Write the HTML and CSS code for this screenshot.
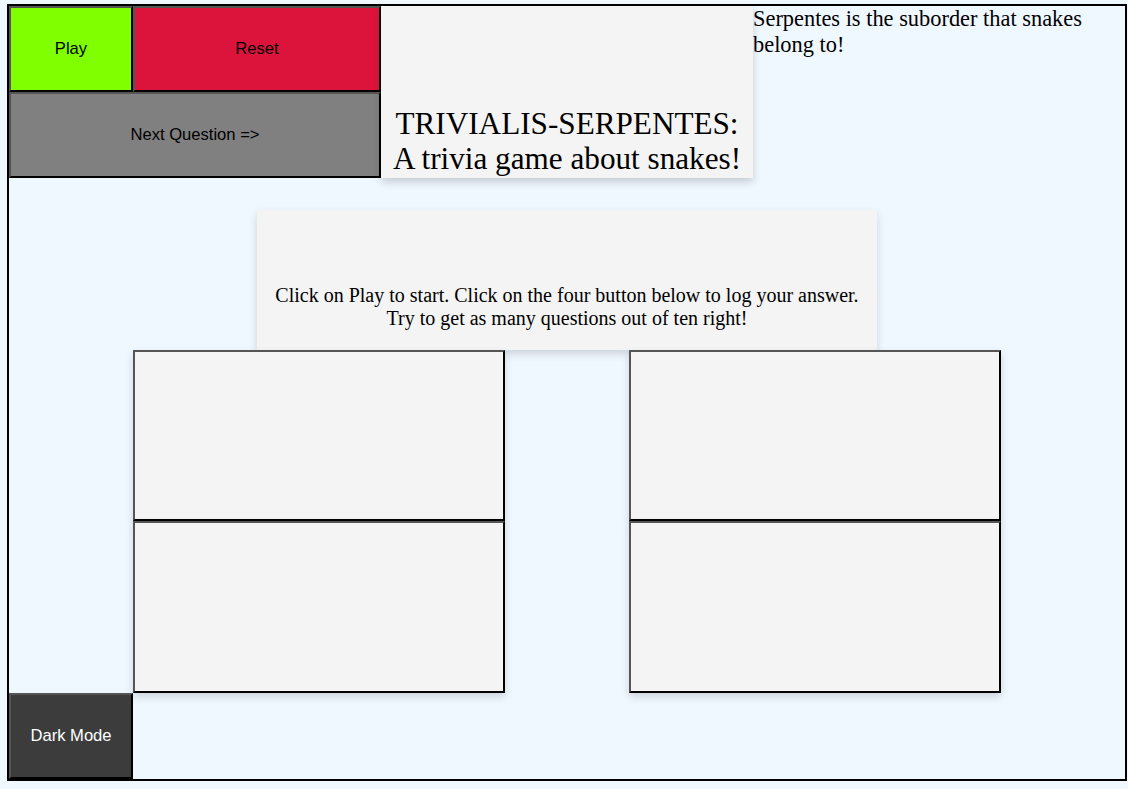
FILE: index.html
```html
<!DOCTYPE html>
<html lang="en">
<head>
<meta charset="utf-8">
<title>Trivialis-Serpentes</title>
<link rel="stylesheet" href="styles.css">
</head>
<body>
<div class="board">
  <button class="btn play">Play</button>
  <button class="btn reset">Reset</button>
  <div class="title"><h1>TRIVIALIS-SERPENTES: A trivia game about snakes!</h1></div>
  <div class="fact">Serpentes is the suborder that snakes belong to!</div>
  <button class="btn next">Next Question =&gt;</button>
  <div class="question"><p>Click on Play to start. Click on the four button below to log your answer. Try to get as many questions out of ten right!</p></div>
  <button class="btn answer a1"></button>
  <button class="btn answer a2"></button>
  <button class="btn answer a3"></button>
  <button class="btn answer a4"></button>
  <button class="btn dark">Dark Mode</button>
</div>
</body>
</html>
```
FILE: styles.css
```css
html { background: #f0f8ff; }
body {
  margin: 4px 0 0 7px;
  background: #f0f8ff;
  font-family: "Liberation Serif", "Times New Roman", serif;
}
.board {
  width: 1116px;
  height: 773px;
  border: 2px solid #000;
  background: #f0f8ff;
  display: grid;
  grid-template-columns: repeat(9, 1fr);
  grid-template-rows: repeat(9, 1fr);
}
.btn {
  margin: 0;
  padding: 0;
  font-family: "Liberation Sans", Arial, sans-serif;
  font-size: 16.6px;
  color: #000;
  border: 2px solid;
  border-color: #555 #000 #000 #555;
  cursor: pointer;
}
.play { grid-column: 1; grid-row: 1; background: #7fff00; }
.reset { grid-column: 2 / 4; grid-row: 1; background: #dc143c; }
.next { grid-column: 1 / 4; grid-row: 2; background: #808080; }
.title {
  grid-column: 4 / 7;
  grid-row: 1 / 3;
  padding: 0 10px;
  background: #f4f4f4;
  box-shadow: 0 4px 8px rgba(0, 0, 0, 0.18);
  display: flex;
  align-items: flex-end;
  justify-content: center;
  z-index: 1;
}
.title h1 {
  margin: 0;
  font-size: 31.2px;
  font-weight: normal;
  text-align: center;
  line-height: 35.5px;
  padding-bottom: 1px;
}
.fact {
  grid-column: 7 / 10;
  grid-row: 1 / 3;
  font-size: 22.4px;
  line-height: 25.8px;
}
.question {
  grid-column: 3 / 8;
  grid-row: 3 / 5;
  margin-top: 32px;
  padding: 0 16px;
  background: #f4f4f4;
  box-shadow: 0 4px 8px rgba(0, 0, 0, 0.15);
  display: flex;
  align-items: flex-end;
  justify-content: center;
}
.question p {
  margin: 0 0 20px;
  font-size: 20px;
  line-height: 23px;
  text-align: center;
}
.answer {
  background: #f4f4f4;
  box-shadow: 0 4px 8px rgba(0, 0, 0, 0.15);
}
.a1 { grid-column: 2 / 5; grid-row: 5 / 7; }
.a2 { grid-column: 6 / 9; grid-row: 5 / 7; }
.a3 { grid-column: 2 / 5; grid-row: 7 / 9; }
.a4 { grid-column: 6 / 9; grid-row: 7 / 9; }
.dark {
  grid-column: 1;
  grid-row: 9;
  background: #3c3c3c;
  color: #fff;
}
```
